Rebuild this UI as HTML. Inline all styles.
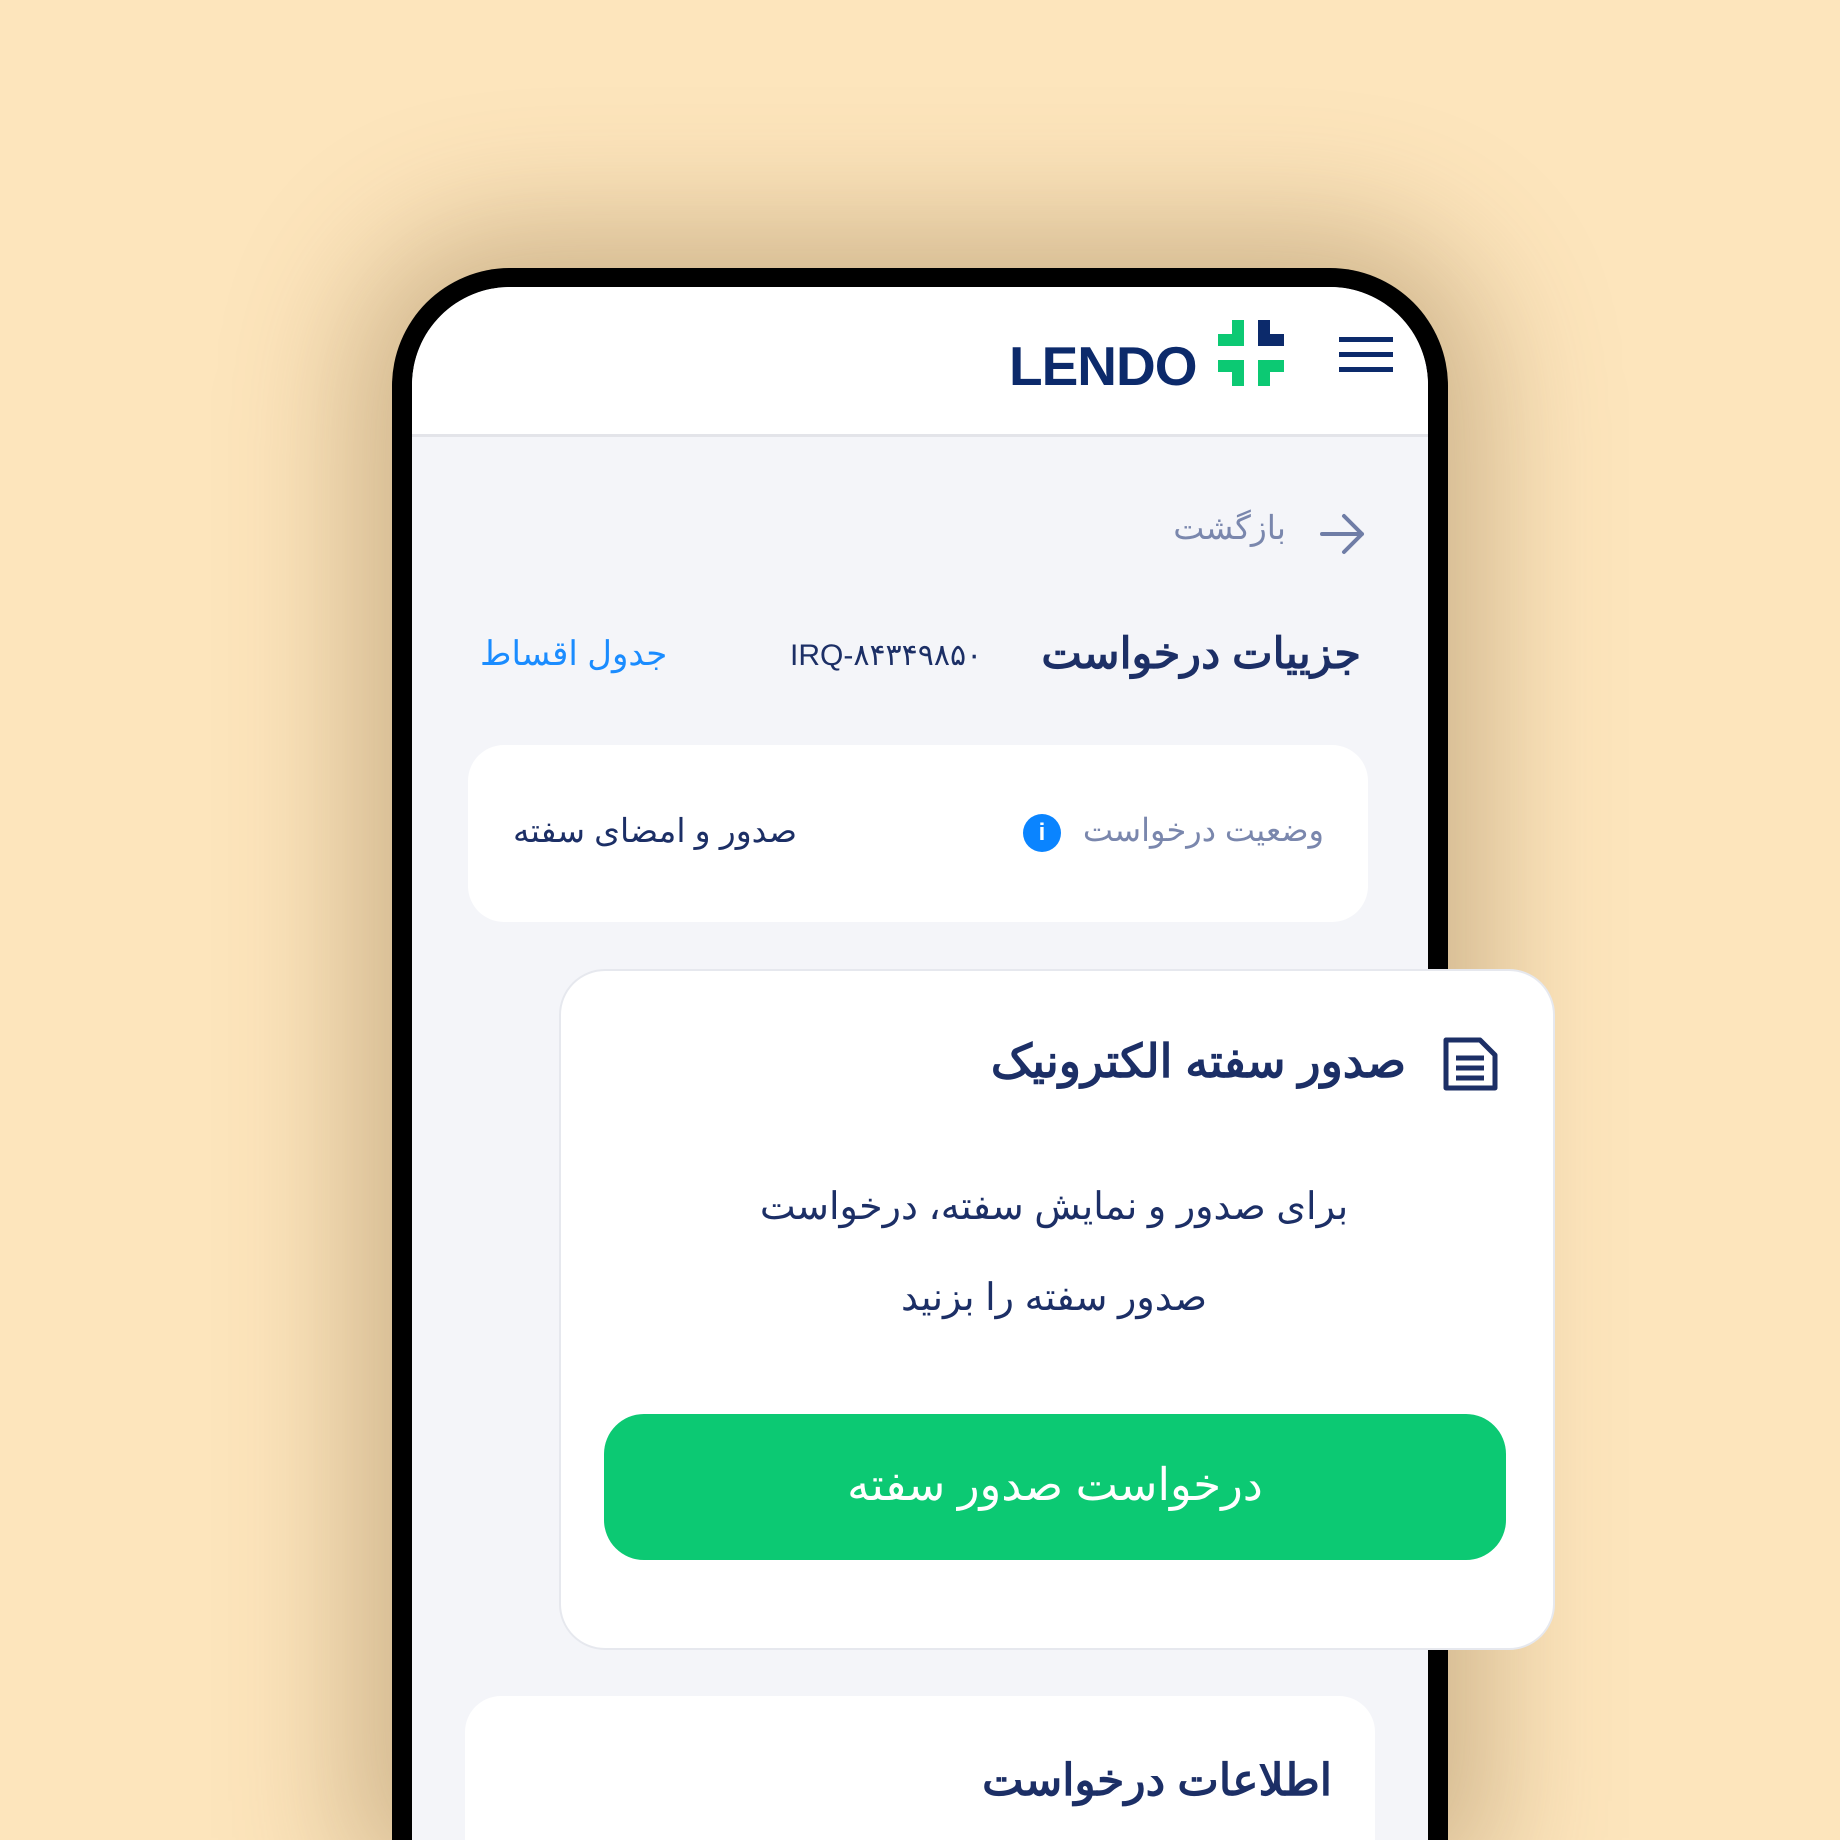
<!DOCTYPE html>
<html><head><meta charset="utf-8"><style>
*{margin:0;padding:0;box-sizing:border-box}
html,body{width:1840px;height:1840px;overflow:hidden}
body{background:#fde5bc;position:relative;font-family:"Liberation Sans","Noto Sans CJK SC",sans-serif;}
.abs{position:absolute}
.phone{left:392px;top:268px;width:1056px;height:1572px;background:#000;border-radius:118px 118px 0 0;box-shadow:0 0 140px 40px rgba(120,90,50,0.35)}
.screen{left:412px;top:287px;width:1016px;height:1553px;background:#f4f5f9;border-radius:98px 98px 0 0;overflow:hidden}
.header{left:0;top:0;width:1016px;height:150px;background:#fff;border-bottom:3px solid #e3e4e9}
.t{position:absolute;white-space:nowrap;direction:rtl;line-height:1}
.card{background:#fff;border-radius:36px}
</style></head><body>
<div class="abs phone"></div>
<div class="abs screen">
  <div class="abs header">
    <div class="abs" style="left:597px;top:47px;font-weight:bold;font-size:55px;color:#0c2a6b;letter-spacing:-1px;font-family:'Liberation Sans',sans-serif">LENDO</div>
    <svg class="abs" style="left:806px;top:33px" width="66" height="66" viewBox="0 0 66 66">
      <path d="M14 0h12v26H0V14h14z" fill="#0cc973"/>
      <path d="M40 0h12v14h14v12H40z" fill="#0c2a6b"/>
      <path d="M0 40h26v26H14V52H0z" fill="#0cc973"/>
      <path d="M40 40h26v12H52v14H40z" fill="#0cc973"/>
    </svg>
    <div class="abs" style="left:927px;top:50px;width:54px;height:5px;background:#0c2a6b"></div>
    <div class="abs" style="left:927px;top:65px;width:54px;height:5px;background:#0c2a6b"></div>
    <div class="abs" style="left:927px;top:80px;width:54px;height:5px;background:#0c2a6b"></div>
  </div>
  <svg class="abs" style="left:908px;top:226px" width="46" height="42" viewBox="0 0 46 42"><path d="M2 21h40M24 3l18 18-18 18" stroke="#6f7da6" stroke-width="4" fill="none" stroke-linecap="round" stroke-linejoin="round"/></svg>
  <div class="t" style="right:142px;top:224px;font-size:33px;color:#7a87ad">بازگشت</div>
  <div class="t" style="right:67px;top:346px;font-size:43px;font-weight:bold;color:#1c2f66">جزییات درخواست</div>
  <div class="t" style="left:378px;top:354px;font-size:30px;color:#1c2f66;direction:ltr">IRQ-۸۴۳۴۹۸۵۰</div>
  <div class="t" style="left:68px;top:350px;font-size:34px;color:#1a8cff">جدول اقساط</div>
  <div class="abs card" style="left:56px;top:458px;width:900px;height:177px"></div>
  <div class="t" style="right:104px;top:527px;font-size:32px;color:#7a87ad">وضعیت درخواست</div>
  <div class="abs" style="left:611px;top:527px;width:38px;height:38px;border-radius:50%;background:#0a84ff;color:#fff;font-weight:bold;font-size:24px;text-align:center;line-height:38px">i</div>
  <div class="t" style="left:101px;top:527px;font-size:33px;color:#1c2f66">صدور و امضای سفته</div>
  <div class="abs card" style="left:53px;top:1409px;width:910px;height:400px"></div>
  <div class="t" style="right:96px;top:1472px;font-size:44px;font-weight:bold;color:#1c2f66">اطلاعات درخواست</div>
</div>
<div class="abs" style="left:559px;top:969px;width:996px;height:681px;background:#fff;border-radius:46px;border:2px solid #e6e8ee"></div>
<svg class="abs" style="left:1442px;top:1036px" width="57" height="56" viewBox="0 0 57 56"><path d="M4 4h34l15 15v33H4z" fill="none" stroke="#1c2f66" stroke-width="5" stroke-linejoin="round"/><path d="M14 22h28M14 32h28M14 42h28" stroke="#1c2f66" stroke-width="5"/></svg>
<div class="t" style="right:434px;top:1038px;font-size:46px;font-weight:bold;color:#1c2f66">صدور سفته الکترونیک</div>
<div class="t" style="left:1054px;top:1188px;transform:translateX(-50%);font-size:38px;color:#1c2f66;direction:rtl">برای صدور و نمایش سفته، درخواست</div>
<div class="t" style="left:1054px;top:1279px;transform:translateX(-50%);font-size:38px;color:#1c2f66">صدور سفته را بزنید</div>
<div class="abs" style="left:604px;top:1414px;width:902px;height:146px;background:#0cc973;border-radius:40px"></div>
<div class="t" style="left:1055px;top:1462px;transform:translateX(-50%);font-size:45px;color:#fff">درخواست صدور سفته</div>
</body></html>
